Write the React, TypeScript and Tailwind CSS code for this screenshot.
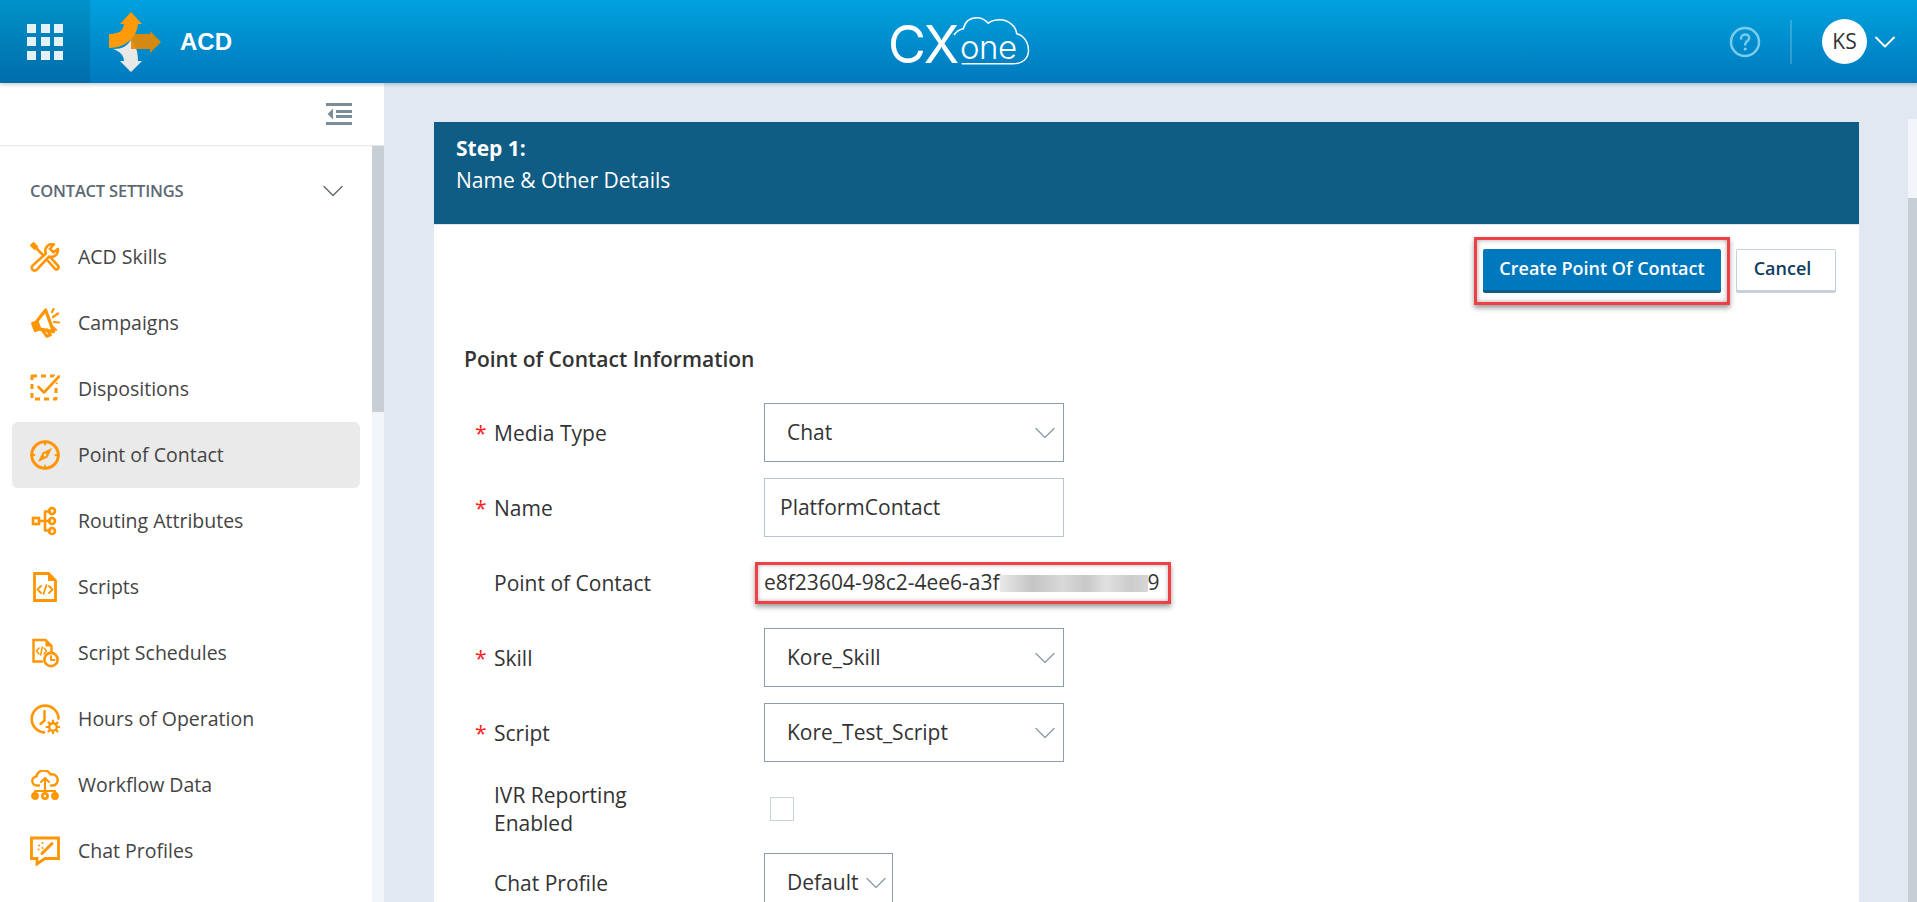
import { ChevronDown } from "lucide-react";
import type { ReactNode } from "react";

const O = "#ff9500";

const Svg = ({ children }: { children: ReactNode }) => (
  <svg width="30" height="30" viewBox="0 0 30 30" fill="none" stroke={O} strokeWidth="2.6" strokeLinejoin="round" strokeLinecap="round" className="shrink-0">
    {children}
  </svg>
);

const SkillsIcon = () => (
  <Svg>
    <path d="M21.5 2.2a6.6 6.6 0 0 0-5.6 9.3L2.6 23.6a2.9 2.9 0 0 0 4 4.2l12.6-13.3a6.6 6.6 0 0 0 8.6-7.6l-4.3 3.4-3.6-3.4 4-4.4a7 7 0 0 0-2.4-.3z" />
    <path d="M5.5 5.5l7 7" />
    <path d="M1.5 3.5l2-2 3.2 3.2-2 2z" fill={O} />
    <path d="M17.5 18.5l7.8 8.6a2.2 2.2 0 0 0 3-3l-7.5-8.4" />
  </Svg>
);

const CampaignIcon = () => (
  <Svg>
    <g transform="rotate(-20 15 15)">
      <path d="M3 11h4v8H3z" fill={O} />
      <path d="M8 10.5L20 3v23L8 19z" strokeWidth="3.2" />
      <path d="M10 20l2 8h4l-1.500-6" strokeWidth="3" />
    </g>
    <path d="M23 9l5-3.500M24 14l5 .5M22 4l1.500-3M23 19l3 3" strokeWidth="2.200" />
  </Svg>
);

const DispositionIcon = () => (
  <Svg>
    <rect x="2" y="2" width="24" height="23" strokeWidth="3" strokeDasharray="5 4" strokeLinecap="butt" />
    <path d="M7.500 12.500l6 6L29 1.500" stroke="#ffffff" strokeWidth="6" />
    <path d="M8.500 13l5.500 5.500L29 2.500" strokeWidth="2.600" />
  </Svg>
);

const CompassIcon = () => (
  <Svg>
    <circle cx="15" cy="15" r="13.300" strokeWidth="3" />
    <path d="M15 1.500v3M15 25.500v3M1.500 15h3M25.500 15h3" strokeWidth="1.800" />
    <path d="M22 8l-9.500 4.500L8 22l9.500-4.500z" fill={O} stroke="none" />
    <circle cx="15" cy="15" r="1.400" fill="#eaeaea" stroke="none" />
  </Svg>
);

const RoutingIcon = () => (
  <Svg>
    <rect x="3" y="12" width="6" height="6" strokeLinejoin="miter" />
    <path d="M9 15h11M15 5.500v19M15 5.500h5M15 24.500h5" />
    <circle cx="22" cy="5" r="3" />
    <circle cx="22" cy="15" r="3" />
    <circle cx="22" cy="25" r="3" />
  </Svg>
);

const ScriptIcon = () => (
  <Svg>
    <path d="M4.500 1.500h14l7 7v20h-21z" strokeWidth="2.800" strokeLinejoin="miter" />
    <path d="M18 1.500v7.500h7.500z" fill={O} stroke="none" />
    <path d="M11 14l-3.500 3.500 3.500 3.500M19 14l3.500 3.500-3.500 3.500M16.500 13l-3 9" strokeWidth="1.800" />
  </Svg>
);

const ScheduleIcon = () => (
  <Svg>
    <path d="M12 23.500H3.500V2h12l6 6v7" strokeWidth="2.400" strokeLinejoin="miter" />
    <path d="M15.500 2v6.500h6z" fill={O} stroke="none" />
    <path d="M9 10l-2.500 3 2.500 3M14 10l2.500 3-2.500 3M12.300 9l-1.600 8" strokeWidth="1.500" />
    <circle cx="21" cy="21.500" r="6.600" fill="#ffffff" strokeWidth="2.600" />
    <path d="M21 18v4h3.500" strokeWidth="2" />
  </Svg>
);

const HoursIcon = () => (
  <Svg>
    <path d="M28.500 14.500A13.400 13.400 0 1 0 14 28.400" strokeWidth="2.600" />
    <path d="M14.500 7v9.500L10.500 20" strokeWidth="2.400" />
    <circle cx="23" cy="23" r="3.800" strokeWidth="2.400" />
    <path d="M23 16.500v2.500M23 27v2.500M16.500 23H19M27 23h2.500M18.500 18.500l1.700 1.700M25.800 25.800l1.700 1.700M18.500 27.500l1.700-1.700M25.800 20.200l1.700-1.700" strokeWidth="2.200" />
  </Svg>
);

const WorkflowIcon = () => (
  <Svg>
    <path d="M9 15.500H7a4.500 4.500 0 0 1-.5-9 7.500 7.500 0 0 1 14-2 5.500 5.500 0 0 1 3 11H21" strokeWidth="2.400" />
    <path d="M15 9v12M5 27v-6h20v6" strokeWidth="2.200" />
    <path d="M11 12l4-4 4 4" strokeWidth="2" />
    <circle cx="5" cy="26" r="2.600" />
    <circle cx="15" cy="26" r="2.600" />
    <circle cx="25" cy="26" r="2.600" />
  </Svg>
);

const ChatProfileIcon = () => (
  <Svg>
    <path d="M1.500 2h27v20.500H15L7 28v-5.500H1.500z" strokeWidth="2.800" strokeLinejoin="miter" />
    <path d="M12 17.500L22 7.500" strokeWidth="3" />
    <path d="M9 9.500h.1M12.500 7h.1M8.500 13.500h.1M12.500 12h.1" strokeWidth="2" />
  </Svg>
);

const NAV: { label: string; icon: ReactNode; active?: boolean }[] = [
  { label: "ACD Skills", icon: <SkillsIcon /> },
  { label: "Campaigns", icon: <CampaignIcon /> },
  { label: "Dispositions", icon: <DispositionIcon /> },
  { label: "Point of Contact", icon: <CompassIcon />, active: true },
  { label: "Routing Attributes", icon: <RoutingIcon /> },
  { label: "Scripts", icon: <ScriptIcon /> },
  { label: "Script Schedules", icon: <ScheduleIcon /> },
  { label: "Hours of Operation", icon: <HoursIcon /> },
  { label: "Workflow Data", icon: <WorkflowIcon /> },
  { label: "Chat Profiles", icon: <ChatProfileIcon /> },
];

const AcdLogo = () => (
  <svg width="52" height="60" viewBox="0 0 52 60" className="shrink-0">
    <path d="M4 37C14 37 18 34 22 28C27 33 29 40 29 49H33L22 60L11 49H15C15 43 10 39 4 37z" fill="#e8e8e8" />
    <path d="M22 22H41V19L52 30L41 41V37H22z" fill="#e68a00" opacity="0.92" />
    <path d="M0 22C8 22 14 20 15 12H11L22 0L33 12H29C28 24 18 36 0 36z" fill="#ff9a0a" />
  </svg>
);

const CxLogo = () => (
  <svg width="142" height="56" viewBox="0 0 142 56" className="overflow-visible">
    <text x="-2" y="48" fontFamily="Inter, 'Liberation Sans', sans-serif" fontWeight="400" fontSize="52" letterSpacing="-2" fill="#ffffff">
      CX
    </text>
    <text x="70" y="43.500" fontFamily="Inter, 'Liberation Sans', sans-serif" fontWeight="300" fontSize="33" letterSpacing="-0.500" fill="#ffffff">
      one
    </text>
    <path
      d="M71.700 48.800H123.300C133 48.800 138.500 43 138.500 35.500C138.500 27 133 20 126.700 18.800C126 11 118 4.800 110 4.800C105 4.800 101 6 98.300 8.200C95 4.500 91 2.800 86.700 2.800C80 2.800 75 7 73.300 13.800C70 14.500 66 17 64 20"
      fill="none"
      stroke="#ffffff"
      strokeWidth="1.500"
    />
  </svg>
);

const Field = ({ label, required, children, className = "" }: { label: ReactNode; required?: boolean; children: ReactNode; className?: string }) => (
  <div className={`flex items-center pl-[41px] ${className}`}>
    <span className="w-[19px] shrink-0 text-[21px] leading-none text-[#ff2020] relative top-[1px]">{required ? "*" : ""}</span>
    <div className="w-[270px] shrink-0 text-[21px] leading-[28px] text-[#333]">{label}</div>
    {children}
  </div>
);

const Select = ({ value, narrow }: { value: string; narrow?: boolean }) => (
  <div className={`h-[59px] shrink-0 border border-[#8b9db3] flex items-center justify-between pl-[22px] text-[21px] text-[#333] ${narrow ? "w-[129px]" : "w-[300px]"}`}>
    <span>{value}</span>
    <ChevronDown size={36} strokeWidth={0.9} className="text-[#8c9cab] shrink-0" />
  </div>
);

export default function App() {
  return (
    <div className="w-[1917px] h-[902px] overflow-hidden flex flex-col bg-[#e1e8f2] font-['Open_Sans',sans-serif]">
      <header className="relative z-10 h-[83px] shrink-0 flex items-center bg-gradient-to-b from-[#00a2de] to-[#0079bd] shadow-[0_2px_3px_rgba(90,110,140,0.3)]">
        <div className="w-[90px] h-full shrink-0 bg-[#00000018] flex items-center justify-center">
          <div className="grid grid-cols-3 gap-[4.500px]">
            {Array.from({ length: 9 }).map((_, i) => (
              <span key={i} className="w-[9px] h-[9px] bg-[#e4f1f7]" />
            ))}
          </div>
        </div>
        <div className="ml-[19px]">
          <AcdLogo />
        </div>
        <span className="ml-[19px] font-['Liberation_Sans',sans-serif] font-bold text-[24px] text-white">ACD</span>
        <div className="ml-[658px] mt-[2px]">
          <CxLogo />
        </div>
        <div className="ml-auto flex items-center">
          <svg width="32" height="32" viewBox="0 0 32 32" fill="none" className="shrink-0">
            <circle cx="16" cy="16" r="14" stroke="#7ccbea" strokeWidth="2.500" />
            <path d="M12 12.500c0-2.500 2-4 4.200-4s4 1.500 4 3.600c0 3-4 3-4 6.500" stroke="#7ccbea" strokeWidth="2.500" strokeLinecap="round" />
            <circle cx="16.200" cy="23" r="1.600" fill="#7ccbea" />
          </svg>
          <span className="ml-[29px] w-[2px] h-[44px] bg-[#ffffff30]" />
          <span className="ml-[30px] w-[45px] h-[45px] rounded-full bg-white flex items-center justify-center text-[21px] text-[#333]">KS</span>
          <ChevronDown size={36} strokeWidth={1.200} className="mr-[14px] text-white" />
        </div>
      </header>

      <div className="flex flex-1 min-h-0">
        <aside className="w-[384px] shrink-0 flex flex-col bg-white">
          <div className="h-[63px] shrink-0 flex items-center justify-end pr-[32px] border-b border-[#e4e6e8]">
            <svg width="26" height="22" viewBox="0 0 26 22" fill="#7d8c99">
              <rect x="0" y="0" width="26" height="3" />
              <rect x="10" y="7" width="16" height="3" />
              <rect x="10" y="12" width="16" height="3" />
              <rect x="0" y="19" width="26" height="3" />
              <path d="M7 5.500v11L1.500 11z" />
            </svg>
          </div>
          <div className="flex flex-1 min-h-0">
            <nav className="flex-1 min-w-0">
              <div className="h-[78px] flex items-center justify-between pl-[30px] pr-[21px] pt-[12px]">
                <span className="text-[16.500px] font-semibold uppercase text-[#5c6873] tracking-[-0.2px]">Contact Settings</span>
                <ChevronDown size={36} strokeWidth={0.9} className="text-[#5c6873]" />
              </div>
              {NAV.map((item) => (
                <div
                  key={item.label}
                  className={`ml-[12px] w-[348px] h-[66px] rounded-md flex items-center gap-[18px] pl-[18px] text-[19.500px] text-[#444] ${item.active ? "bg-[#eaeaea]" : ""}`}
                >
                  {item.icon}
                  <span>{item.label}</span>
                </div>
              ))}
            </nav>
            <div className="w-[12px] shrink-0 flex flex-col bg-[#f2f5f9]">
              <div className="h-[266px] bg-[#c8ced6]" />
            </div>
          </div>
        </aside>

        <main className="flex-1 min-w-0 pl-[50px] pr-[49px] pt-[39px]">
          <section className="w-[1425px] bg-white">
            <div className="h-[102px] bg-[#0f5c85] pl-[22px] pt-[10px] text-[21px] leading-[32px] text-white">
              <div className="font-bold">Step 1:</div>
              <div>Name &amp; Other Details</div>
            </div>
            <div className="border-t border-[#dfe5ee]" />
            <div className="flex justify-end items-center pt-[12px] pr-[23px] gap-[6px]">
              <div className="border-[3px] border-[#f04045] px-[6px] py-[9px] shadow-[0_3px_5px_rgba(0,0,0,0.4),inset_0_0_5px_rgba(0,0,0,0.35)]">
                <button className="w-[238px] h-[44px] rounded-[2px] bg-[#0078bd] border-b-[3px] border-[#0f5c85] text-[18px] font-semibold text-white pb-[3px]">
                  Create Point Of Contact
                </button>
              </div>
              <button className="w-[100px] h-[44px] rounded-[2px] bg-white border border-[#c5d0da] border-b-[3px] text-[18px] font-semibold text-[#0f3d5e] pb-[4px] pr-[7px]">
                Cancel
              </button>
            </div>

            <h2 className="mt-[40px] pl-[30px] text-[21px] leading-[28px] font-semibold text-[#333]">Point of Contact Information</h2>

            <Field required label="Media Type" className="mt-[30px]">
              <Select value="Chat" />
            </Field>
            <Field required label="Name" className="mt-[16px]">
              <div className="w-[300px] h-[59px] border border-[#b5c4cf] flex items-center pl-[15px] text-[21px] text-[#333]">PlatformContact</div>
            </Field>
            <Field label="Point of Contact" className="mt-[25px]">
              <div className="ml-[-9px] w-[416px] h-[42px] border-[3px] border-[#f04045] pl-[6px] flex items-center text-[21px] text-[#333] shadow-[0_3px_5px_rgba(0,0,0,0.4),inset_0_0_4px_rgba(0,0,0,0.3)]">
                <span>e8f23604-98c2-4ee6-a3f</span>
                <span className="w-[148px] h-[17px] shrink-0 bg-[linear-gradient(90deg,#e8e8e8,#c4c4c4_22%,#d8d8d8_42%,#c8c8c8_58%,#e0e0e0_72%,#cccccc_88%,#d6d6d6)]" />
                <span>9</span>
              </div>
            </Field>
            <Field required label="Skill" className="mt-[24px]">
              <Select value="Kore_Skill" />
            </Field>
            <Field required label="Script" className="mt-[16px]">
              <Select value="Kore_Test_Script" />
            </Field>
            <Field label={<>IVR Reporting<br />Enabled</>} className="mt-[19px]">
              <span className="ml-[6px] w-[24px] h-[24px] border border-[#c9d1d9] bg-white" />
            </Field>
            <Field label="Chat Profile" className="mt-[16px]">
              <Select value="Default" narrow />
            </Field>
          </section>
        </main>

        <div className="w-[9px] shrink-0 mt-[36px] flex flex-col">
          <div className="h-[79px] bg-[#f2f5f9]" />
          <div className="flex-1 bg-[#c8ced6]" />
        </div>
      </div>
    </div>
  );
}
